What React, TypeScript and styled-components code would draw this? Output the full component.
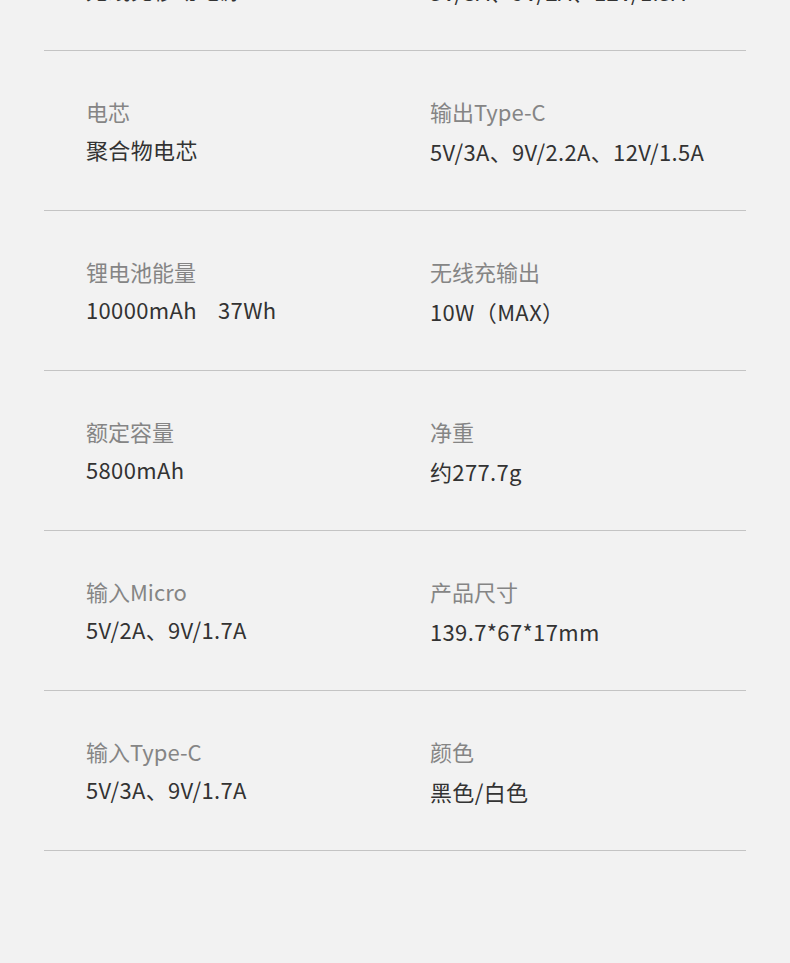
import React from "react";
import styled, { createGlobalStyle } from "styled-components";

const Global = createGlobalStyle`
  html, body {
    margin: 0;
    padding: 0;
    background: #f2f2f2;
  }
`;

type Spec = { label: string; value: string };

const rows: [Spec, Spec][] = [
  [
    { label: "产品名称", value: "无线充移动电源" },
    { label: "输入Type-C", value: "5V/3A、9V/2A、12V/1.5A" },
  ],
  [
    { label: "电芯", value: "聚合物电芯" },
    { label: "输出Type-C", value: "5V/3A、9V/2.2A、12V/1.5A" },
  ],
  [
    { label: "锂电池能量", value: "10000mAh\u00a0\u00a0\u00a0\u00a037Wh" },
    { label: "无线充输出", value: "10W（MAX）" },
  ],
  [
    { label: "额定容量", value: "5800mAh" },
    { label: "净重", value: "约277.7g" },
  ],
  [
    { label: "输入Micro", value: "5V/2A、9V/1.7A" },
    { label: "产品尺寸", value: "139.7*67*17mm" },
  ],
  [
    { label: "输入Type-C", value: "5V/3A、9V/1.7A" },
    { label: "颜色", value: "黑色/白色" },
  ],
];

const App = () => {
  return (
    <>
      <Global />
      <Page>
        <List>
          {rows.map((pair, i) => (
            <Row key={i}>
              {pair.map((spec, j) => (
                <Cell key={j}>
                  <Label>{spec.label}</Label>
                  <Value $shift={j === 1}>{spec.value}</Value>
                </Cell>
              ))}
            </Row>
          ))}
        </List>
      </Page>
    </>
  );
};

const Page = styled.div`
  width: 790px;
  height: 963px;
  overflow: hidden;
  background: #f2f2f2;
  font-family: "Noto Sans CJK SC", "Noto Sans", sans-serif;
`;

const List = styled.div`
  margin: -109px 44px 0;
`;

const Row = styled.div`
  height: 160px;
  box-sizing: border-box;
  border-bottom: 1px solid #c4c4c4;
  padding: 47px 0 0 42px;
  display: grid;
  grid-template-columns: 344px 1fr;
`;

const Cell = styled.div`
  display: flex;
  flex-direction: column;
`;

const Label = styled.div`
  font-size: 22px;
  line-height: 26px;
  color: #858585;
`;

const Value = styled.div<{ $shift?: boolean }>`
  margin-top: ${(p) => (p.$shift ? 14 : 12)}px;
  font-size: 22px;
  line-height: 26px;
  letter-spacing: 0.35px;
  color: #333;
  white-space: nowrap;
`;

export default App;
